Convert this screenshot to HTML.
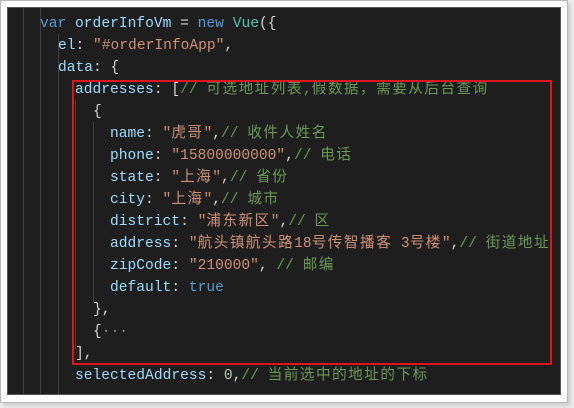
<!DOCTYPE html>
<html><head><meta charset="utf-8"><style>
html,body{margin:0;padding:0;background:#f0f0f0;width:574px;height:408px;overflow:hidden}
.card{position:absolute;left:0;top:0;width:566px;height:401px;background:#fff;border:1px solid #b8b8b8;box-shadow:3px 3px 4px #ccc}
.panel{position:absolute;left:7px;top:7px;width:554px;height:388px;background:#1e1e1e;border:1px solid #555;box-sizing:border-box;overflow:hidden}
.g{position:absolute;top:0;width:1px;background:#404040}
.l{position:absolute;white-space:pre;font-family:"Liberation Mono","Noto Sans CJK SC",monospace;font-size:14.6px;line-height:22px;color:#d4d4d4;margin-top:1px}
.z{letter-spacing:1.5px}
.k{color:#569cd6}.p{color:#9cdcfe}.t{color:#4ec9b0}.s{color:#ce9178}.c{color:#6a9955}
.box{position:absolute;left:64px;top:72px;width:480px;height:285px;border:2px solid #e0141e;box-sizing:border-box}
</style></head><body>
<div class="card"></div>
<div class="panel">
<div class="g" style="left:15px;height:388px"></div>
<div class="g" style="left:32px;height:388px"></div>
<div class="g" style="left:50px;top:26px;height:362px"></div>
<div class="g" style="left:67px;top:92px;height:250px"></div>
<div class="g" style="left:85px;top:114px;height:180px"></div>
<div class="l" style="left:32px;top:4px"><span class="k">var</span> <span class="p">orderInfoVm</span> = <span class="k">new</span> <span class="t">Vue</span>({</div>
<div class="l" style="left:50px;top:26px"><span class="p">el</span>: <span class="s">"#orderInfoApp"</span>,</div>
<div class="l" style="left:50px;top:48px"><span class="p">data</span>: {</div>
<div class="l" style="left:67px;top:70px"><span class="p">addresses</span>: [<span class="c">// <span class="z">可选地址列表</span>,<span class="z">假数据，需要从后台查询</span></span></div>
<div class="l" style="left:85px;top:92px">{</div>
<div class="l" style="left:102px;top:114px"><span class="p">name</span>: <span class="s">"<span class="z">虎哥</span>"</span>,<span class="c">// <span class="z">收件人姓名</span></span></div>
<div class="l" style="left:102px;top:136px"><span class="p">phone</span>: <span class="s">"15800000000"</span>,<span class="c">// <span class="z">电话</span></span></div>
<div class="l" style="left:102px;top:158px"><span class="p">state</span>: <span class="s">"<span class="z">上海</span>"</span>,<span class="c">// <span class="z">省份</span></span></div>
<div class="l" style="left:102px;top:180px"><span class="p">city</span>: <span class="s">"<span class="z">上海</span>"</span>,<span class="c">// <span class="z">城市</span></span></div>
<div class="l" style="left:102px;top:202px"><span class="p">district</span>: <span class="s">"<span class="z">浦东新区</span>"</span>,<span class="c">// <span class="z">区</span></span></div>
<div class="l" style="left:102px;top:224px"><span class="p">address</span>: <span class="s">"<span class="z">航头镇航头路</span>18<span class="z">号传智播客</span> 3<span class="z">号楼</span>"</span>,<span class="c">// <span class="z">街道地址</span></span></div>
<div class="l" style="left:102px;top:246px"><span class="p">zipCode</span>: <span class="s">"210000"</span>, <span class="c">// <span class="z">邮编</span></span></div>
<div class="l" style="left:102px;top:268px"><span class="p">default</span>: <span class="k">true</span></div>
<div class="l" style="left:85px;top:290px">},</div>
<div class="l" style="left:85px;top:312px">{<span style="color:#888">···</span></div>
<div class="l" style="left:67px;top:334px">],</div>
<div class="l" style="left:67px;top:356px"><span class="p">selectedAddress</span>: <span style="color:#b5cea8">0</span>,<span class="c">// <span class="z">当前选中的地址的下标</span></span></div>
<div class="box"></div>
</div>
</body></html>
